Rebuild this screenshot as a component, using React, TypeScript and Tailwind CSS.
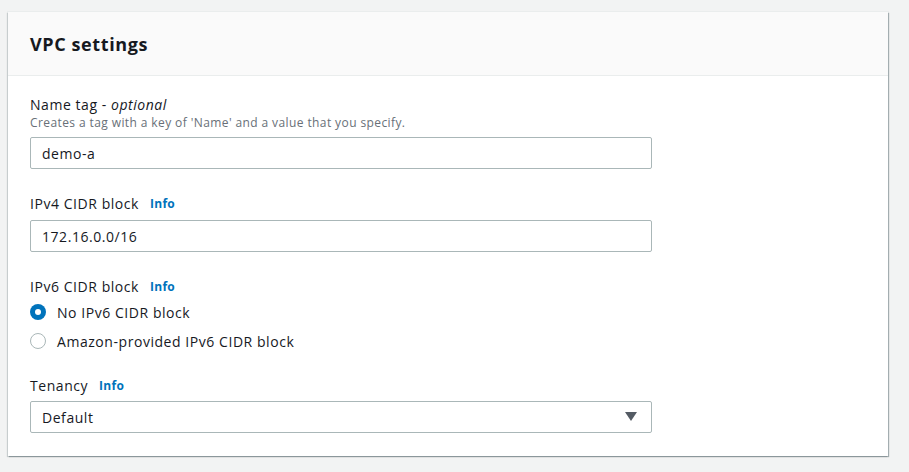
export default function App() {
  const font = { fontFamily: '"Open Sans", "Noto Sans", Arial, sans-serif' };
  return (
    <div className="min-h-[472px] w-[909px] bg-[#f2f3f3] pt-3 pl-2" style={font}>
      <div className="w-[880px] bg-white shadow-[1px_1px_1px_0_rgba(0,28,36,0.3),-1px_1px_1px_0_rgba(0,28,36,0.15),0_0_0_1px_#eaeded]">
        <div className="h-16 bg-[#fafafa] border-b border-[#eaeded] px-[22px] flex items-center">
          <h2 className="text-[18px] font-bold text-[#16191f] leading-none tracking-[0.6px]">VPC settings</h2>
        </div>

        <div className="px-[22px] pt-[19px] pb-[23px] tracking-[0.55px]">
          <div>
            <div className="text-[14px] leading-5 text-[#16191f]">
              Name tag - <i>optional</i>
            </div>
            <div className="text-[12px] leading-4 text-[#687078] tracking-[0.4px]">
              Creates a tag with a key of 'Name' and a value that you specify.
            </div>
            <div className="mt-[6px] w-[622px] h-8 border border-[#aab7b8] rounded-[2px] px-[11px] flex items-center text-[14px] text-[#16191f]">
              demo-a
            </div>
          </div>

          <div className="mt-[25px]">
            <div className="flex items-center text-[14px] leading-5 text-[#16191f]">
              IPv4 CIDR block
              <span className="ml-[11px] text-[12px] font-bold text-[#0073bb] tracking-[0.3px]">Info</span>
            </div>
            <div className="mt-[6px] w-[622px] h-8 border border-[#aab7b8] rounded-[2px] px-[11px] flex items-center text-[14px] text-[#16191f]">
              172.16.0.0/16
            </div>
          </div>

          <div className="mt-[25px]">
            <div className="flex items-center text-[14px] leading-5 text-[#16191f]">
              IPv6 CIDR block
              <span className="ml-[11px] text-[12px] font-bold text-[#0073bb] tracking-[0.3px]">Info</span>
            </div>
            <div className="mt-[5px] flex items-center gap-[11px] h-5 text-[14px] text-[#16191f]">
              <span className="w-4 h-4 rounded-full bg-[#0073bb] flex items-center justify-center">
                <span className="w-[6px] h-[6px] rounded-full bg-white" />
              </span>
              No IPv6 CIDR block
            </div>
            <div className="mt-[9px] flex items-center gap-[11px] h-5 text-[14px] text-[#16191f]">
              <span className="w-4 h-4 rounded-full border border-[#aab7b8] bg-white" />
              Amazon-provided IPv6 CIDR block
            </div>
          </div>

          <div className="mt-[25px]">
            <div className="flex items-center text-[14px] leading-5 text-[#16191f]">
              Tenancy
              <span className="ml-[11px] text-[12px] font-bold text-[#0073bb] tracking-[0.3px]">Info</span>
            </div>
            <div className="mt-[5px] w-[622px] h-8 border border-[#aab7b8] rounded-[2px] pl-[11px] pr-[14px] flex items-center justify-between text-[14px] text-[#16191f]">
              Default
              <svg width="12" height="10" viewBox="0 0 12 10">
                <path d="M0 0 H12 L6 9 Z" fill="#545b64" />
              </svg>
            </div>
          </div>
        </div>
      </div>
    </div>
  );
}
